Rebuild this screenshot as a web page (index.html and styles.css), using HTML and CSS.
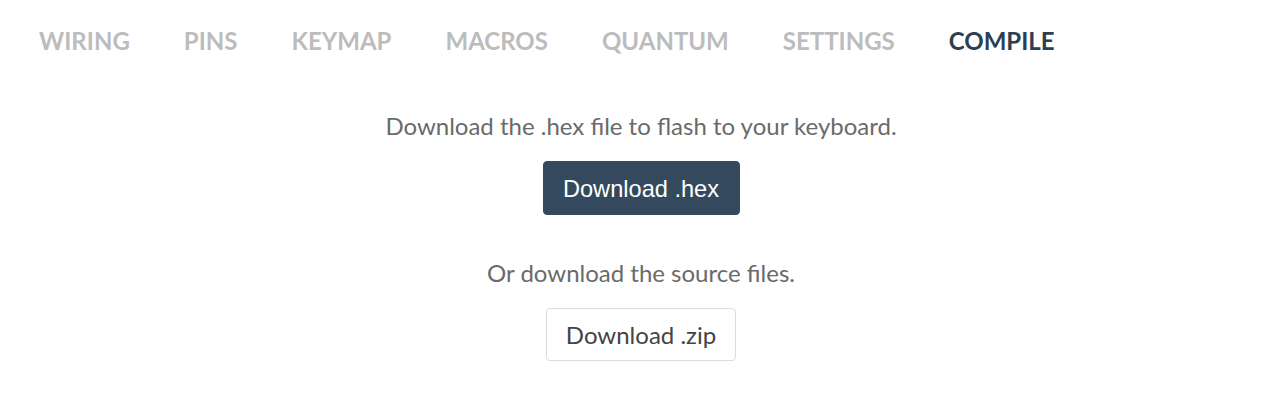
FILE: index.html
```html
<!DOCTYPE html>
<html>
<head>
<meta charset="utf-8">
<link rel="stylesheet" href="styles.css">
</head>
<body>
<nav class="tabs">
  <a class="tab">WIRING</a>
  <a class="tab">PINS</a>
  <a class="tab">KEYMAP</a>
  <a class="tab">MACROS</a>
  <a class="tab">QUANTUM</a>
  <a class="tab">SETTINGS</a>
  <a class="tab active">COMPILE</a>
</nav>
<main class="compile">
  <p class="note">Download the .hex file to flash to your keyboard.</p>
  <button class="btn btn-primary">Download .hex</button>
  <p class="note second">Or download the source files.</p>
  <button class="btn btn-default">Download .zip</button>
</main>
</body>
</html>
```

FILE: styles.css
```css
html, body {
  margin: 0;
  padding: 0;
  background: #ffffff;
}
body {
  font-family: Lato, "Open Sans", sans-serif;
  width: 1280px;
  height: 414px;
  overflow: hidden;
}
.tabs {
  display: flex;
  padding: 23px 0 0 12px;
}
.tab {
  font-weight: 700;
  font-size: 24px;
  line-height: 36px;
  color: #bcbcbc;
  padding: 0 27px;
}
.tab.active {
  color: #2c3e50;
}
.compile {
  display: flex;
  flex-direction: column;
  align-items: center;
  padding-top: 53px;
  padding-left: 2px;
}
.note {
  margin: 0;
  font-size: 24px;
  color: #6a6a6a;
  line-height: 28px;
}
.note.second {
  margin-top: 44px;
}
.btn {
  font-family: Lato, sans-serif;
  font-size: 24px;
  border-radius: 4px;
  margin-top: 21px;
  padding: 0;
  line-height: 1;
}
.btn-primary {
  font-family: "Liberation Sans", Arial, sans-serif;
  font-size: 23.6px;
  background: #34495e;
  border: 1px solid #34495e;
  color: #ffffff;
  width: 197px;
  height: 54px;
  padding-top: 3px;
}
.btn-default {
  background: #ffffff;
  border: 1px solid #dcdcdc;
  color: #444444;
  width: 190px;
  height: 53px;
}
```
